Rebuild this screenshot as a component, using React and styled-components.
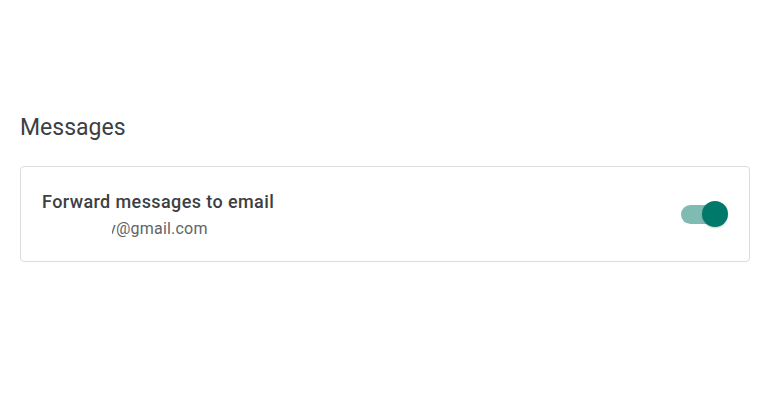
import React, { useState } from "react";
import styled, { createGlobalStyle } from "styled-components";

const GlobalStyle = createGlobalStyle`
  body {
    margin: 0;
    background: #ffffff;
    font-family: Roboto, "Noto Sans", Arial, sans-serif;
  }
`;

function App() {
  const [forward, setForward] = useState(true);
  return (
    <>
      <GlobalStyle />
      <Page>
        <Heading>Messages</Heading>
        <Card>
          <Info>
            <Title>Forward messages to email</Title>
            <Email>
              <Hidden>v</Hidden>@gmail.com
            </Email>
          </Info>
          <Switch on={forward} onClick={() => setForward(!forward)}>
            <Track on={forward} />
            <Thumb on={forward} />
          </Switch>
        </Card>
      </Page>
    </>
  );
}

export default App;

const Page = styled.div`
  padding: 113px 18px 0 20px;
`;

const Heading = styled.h2`
  margin: 0 0 23px;
  font-size: 23px;
  font-weight: 400;
  color: #3c4043;
  line-height: 30px;
`;

const Card = styled.div`
  display: flex;
  align-items: center;
  justify-content: space-between;
  height: 96px;
  box-sizing: border-box;
  padding: 0 20px 0 21px;
  border: 1px solid #dadce0;
  border-radius: 4px;
`;

const Info = styled.div`
  display: flex;
  flex-direction: column;
  margin-top: 1px;
`;

const Title = styled.div`
  font-size: 18px;
  font-weight: 500;
  color: #3c4043;
  line-height: 24px;
  letter-spacing: 0.4px;
`;

const Email = styled.div`
  margin-top: 4px;
  padding-left: 70px;
  font-size: 16px;
  color: #5f6368;
  line-height: 22px;
  letter-spacing: 0.2px;
`;

const Hidden = styled.span`
  display: inline-block;
  width: 4px;
  overflow: hidden;
  direction: rtl;
  vertical-align: bottom;
`;

const Switch = styled.div`
  position: relative;
  width: 48px;
  height: 28px;
  display: flex;
  align-items: center;
  cursor: pointer;
`;

const Track = styled.div`
  width: 42px;
  height: 19px;
  border-radius: 10px;
  background: ${({ on }) => (on ? "#7fbab3" : "#bdc1c6")};
`;

const Thumb = styled.div`
  position: absolute;
  top: 1px;
  left: ${({ on }) => (on ? "21px" : "0")};
  width: 26px;
  height: 26px;
  border-radius: 50%;
  background: ${({ on }) => (on ? "#00796b" : "#ffffff")};
  box-shadow: 0 1px 2px rgba(0, 0, 0, 0.2);
`;
